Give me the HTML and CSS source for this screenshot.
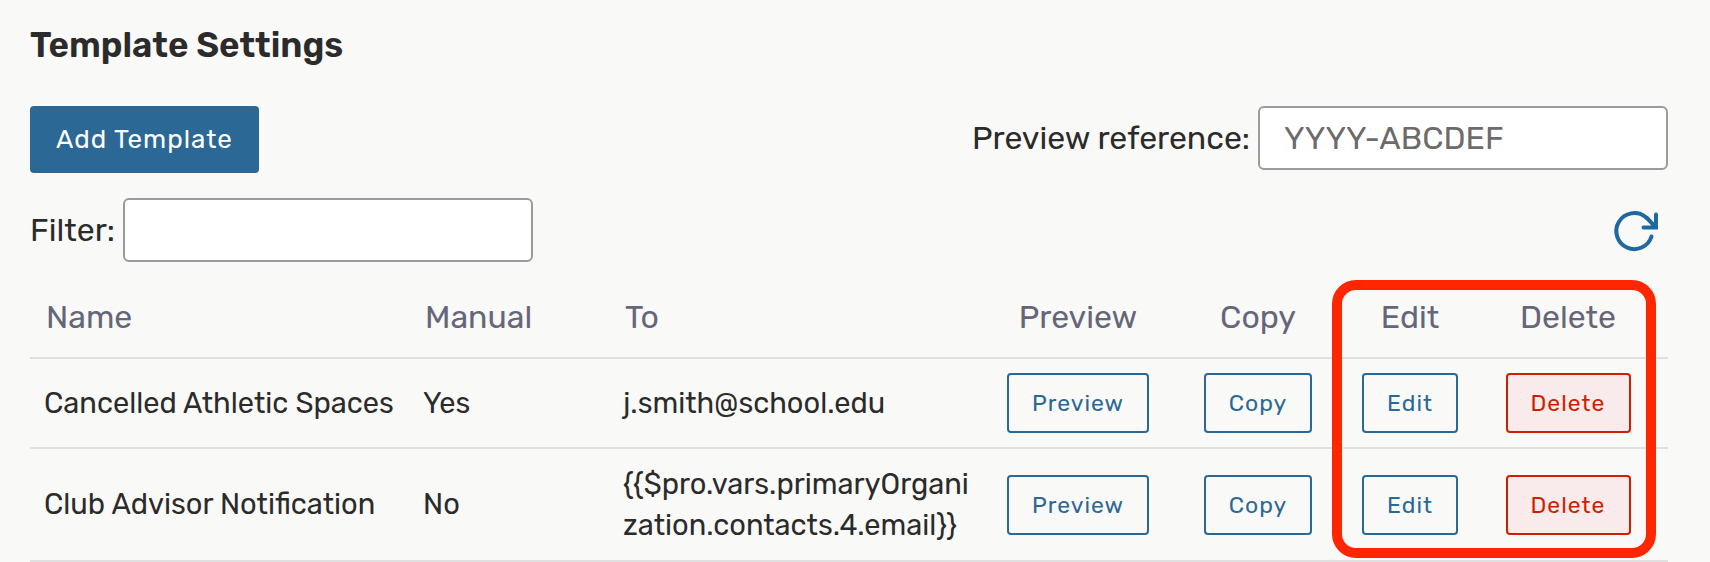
FILE: index.html
```html
<!DOCTYPE html>
<html lang="en">
<head>
    <meta charset="utf-8">
    <title>Template Settings</title>
    <link rel="stylesheet" href="styles.css">
</head>
<body>
    <main class="page">
        <h1>Template Settings</h1>

        <div class="toolbar">
            <button type="button" class="btn-primary">Add Template</button>
            <div class="field">
                <label for="reference">Preview reference:</label>
                <input type="text" id="reference" placeholder="YYYY-ABCDEF">
            </div>
        </div>

        <div class="toolbar filter-bar">
            <div class="field">
                <label for="filter">Filter:</label>
                <input type="text" id="filter">
            </div>
            <button type="button" class="refresh" aria-label="Refresh">
                <svg width="48" height="48" viewBox="0 0 48 48" fill="none" stroke="#1f69a3" stroke-width="4" stroke-linecap="round">
                    <path d="M39.500 30.500A18 18 0 1 1 33.500 11C37 13.500 40 17.500 43 20.500"/>
                    <path d="M31.500 21.500H44V8.500" stroke-linejoin="miter"/>
                </svg>
            </button>
        </div>

        <div class="table-wrap">
            <table>
                <colgroup>
                    <col class="col-name">
                    <col class="col-manual">
                    <col class="col-to">
                    <col class="col-preview">
                    <col class="col-copy">
                    <col class="col-edit">
                    <col class="col-delete">
                </colgroup>
                <thead>
                    <tr>
                        <th>Name</th>
                        <th>Manual</th>
                        <th>To</th>
                        <th class="action">Preview</th>
                        <th class="action">Copy</th>
                        <th class="action">Edit</th>
                        <th class="action">Delete</th>
                    </tr>
                </thead>
                <tbody>
                    <tr>
                        <td>Cancelled Athletic Spaces</td>
                        <td>Yes</td>
                        <td class="to">j.smith@school.edu</td>
                        <td class="action"><button type="button" class="btn">Preview</button></td>
                        <td class="action"><button type="button" class="btn">Copy</button></td>
                        <td class="action"><button type="button" class="btn">Edit</button></td>
                        <td class="action"><button type="button" class="btn btn-danger">Delete</button></td>
                    </tr>
                    <tr>
                        <td>Club Advisor Notification</td>
                        <td>No</td>
                        <td class="to">{{$pro.vars.primaryOrganization.contacts.4.email}}</td>
                        <td class="action"><button type="button" class="btn">Preview</button></td>
                        <td class="action"><button type="button" class="btn">Copy</button></td>
                        <td class="action"><button type="button" class="btn">Edit</button></td>
                        <td class="action"><button type="button" class="btn btn-danger">Delete</button></td>
                    </tr>
                </tbody>
            </table>
            <div class="highlight"></div>
        </div>
    </main>
</body>
</html>
```

FILE: styles.css
```css
* {
    box-sizing: border-box;
}

body {
    margin: 0;
    background-color: #f9f9f7;
    color: #2b2b2b;
    font-family: Rubik, Roboto, sans-serif;
    font-size: 32px;
}

.page {
    padding: 21px 42px 0 30px;
}

h1 {
    margin: 0 0 37px;
    font-size: 35px;
    line-height: 48px;
    font-weight: 600;
}

button,
input {
    font-family: inherit;
}

button {
    cursor: pointer;
}

.toolbar {
    display: flex;
    justify-content: space-between;
    align-items: flex-start;
}

.filter-bar {
    align-items: center;
    margin: 25px 0 12px;
}

.field {
    display: flex;
    align-items: center;
    gap: 8px;
}

.field input {
    width: 410px;
    height: 64px;
    padding: 0 24px;
    border: 2px solid #9b9b9b;
    border-radius: 6px;
    background-color: #fff;
    color: #2b2b2b;
    font-size: 32px;
}

.field input::placeholder {
    color: #6b6b6b;
}

.btn-primary {
    height: 67px;
    padding: 0 26px;
    border: 0;
    border-radius: 4px;
    background-color: #2b6896;
    color: #fff;
    font-size: 26px;
    letter-spacing: 1px;
}

.refresh {
    display: flex;
    margin-right: 8px;
    padding: 0;
    border: 0;
    background: none;
}

.table-wrap {
    position: relative;
}

table {
    width: 100%;
    border-collapse: separate;
    border-spacing: 0;
    table-layout: fixed;
}

th,
td {
    border-bottom: 2px solid #e0e0e0;
    text-align: left;
}

th {
    height: 85px;
    padding: 2px 16px 0;
    color: #66667a;
    font-size: 32px;
    font-weight: 400;
}

td {
    padding: 14px;
    font-size: 29px;
    line-height: 41px;
}

.action {
    padding-left: 8px;
    padding-right: 8px;
    text-align: center;
}

.to {
    word-break: break-all;
}

tbody tr {
    height: 90px;
}

tbody tr:last-child {
    height: 113px;
}

.col-manual,
.col-delete {
    width: 200px;
}

.col-to {
    width: 383px;
}

.col-preview {
    width: 172px;
}

.col-copy {
    width: 188px;
}

.col-edit {
    width: 116px;
}

.btn {
    display: inline-block;
    height: 60px;
    padding: 0 23px;
    border: 2px solid #2b6896;
    border-radius: 4px;
    background-color: transparent;
    color: #2b6896;
    font-size: 23px;
    letter-spacing: 1px;
    vertical-align: middle;
}

.btn-danger {
    border-color: #d01f00;
    background-color: #f9ebeb;
    color: #d01f00;
}

/* marks the edit and delete columns */
.highlight {
    position: absolute;
    top: 6px;
    right: 12px;
    bottom: 4px;
    width: 324px;
    border: 10px solid #ff2600;
    border-radius: 24px;
    pointer-events: none;
}
```
